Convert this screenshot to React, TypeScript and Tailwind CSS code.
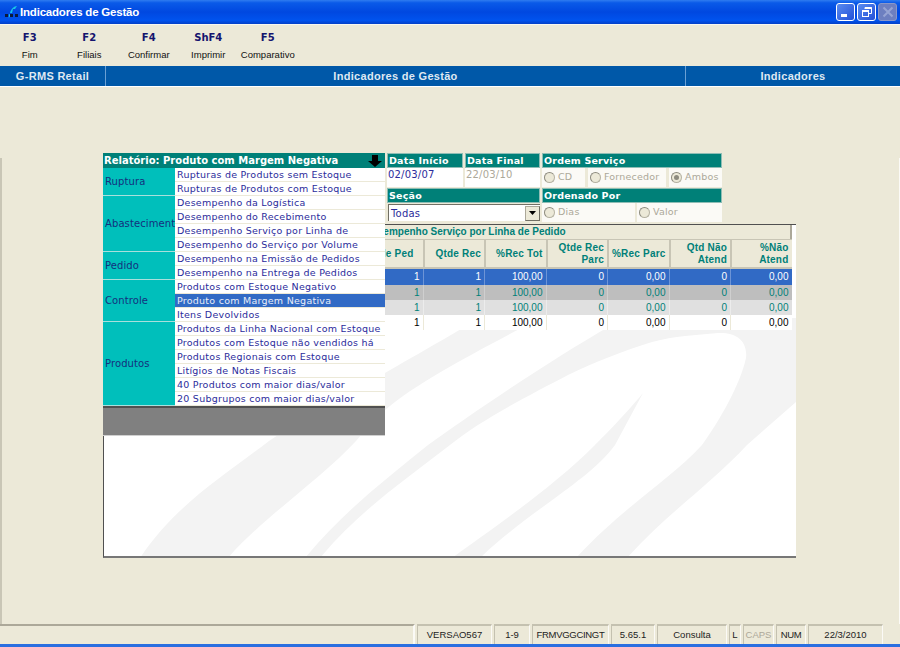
import React from 'react';

const groups = [
  { label: 'Ruptura', items: ['Rupturas de Produtos sem Estoque', 'Rupturas de Produtos com Estoque'] },
  {
    label: 'Abasteciment',
    items: ['Desempenho da Logística', 'Desempenho do Recebimento', 'Desempenho Serviço por Linha de', 'Desempenho do Serviço por Volume'],
  },
  { label: 'Pedido', items: ['Desempenho na Emissão de Pedidos', 'Desempenho na Entrega de Pedidos'] },
  { label: 'Controle', items: ['Produtos com Estoque Negativo', 'Produto com Margem Negativa', 'Itens Devolvidos'] },
  {
    label: 'Produtos',
    items: [
      'Produtos da Linha Nacional com Estoque',
      'Produtos com Estoque não vendidos há',
      'Produtos Regionais com Estoque',
      'Litígios de Notas Fiscais',
      '40 Produtos com maior dias/valor',
      '20 Subgrupos com maior dias/valor',
    ],
  },
];

const toolbar = [
  ['F3', 'Fim'],
  ['F2', 'Filiais'],
  ['F4', 'Confirmar'],
  ['ShF4', 'Imprimir'],
  ['F5', 'Comparativo'],
];

const columns = [['Qtde Ped'], ['Qtde Rec'], ['%Rec Tot'], ['Qtde Rec', 'Parc'], ['%Rec Parc'], ['Qtd Não', 'Atend'], ['%Não', 'Atend']];
const values = ['1', '1', '100,00', '0', '0,00', '0', '0,00'];

const rows = [
  { bg: 'bg-[#316ac5]', text: 'text-[#ffffff]', line: 'border-[#6d94d6]', h: 'h-[16px]' },
  { bg: 'bg-[#bebebe]', text: 'text-[#008078]', line: 'border-[#cfcfcf]', h: 'h-[15px]' },
  { bg: 'bg-[#e0e0e0]', text: 'text-[#008078]', line: 'border-[#ececec]', h: 'h-[15px]' },
  { bg: 'bg-[#ffffff]', text: 'text-[#000000]', line: 'border-[#ece9d8]', h: 'h-[15px]' },
];

const statusPanels = [
  { text: 'VERSAO567', w: 'w-[75px]' },
  { text: '1-9', w: 'w-[36px]' },
  { text: 'FRMVGGCINGT', w: 'w-[77px]', tight: true },
  { text: '5.65.1', w: 'w-[44px]' },
  { text: 'Consulta', w: 'w-[70px]' },
  { text: 'L', w: 'w-[12px]' },
  { text: 'CAPS', w: 'w-[31px]', muted: true },
  { text: 'NUM', w: 'w-[30px]', tight: true },
  { text: '22/3/2010', w: 'w-[75px]' },
];

function FieldHeader({ children }: { children: React.ReactNode }) {
  return (
    <div className="h-[15px] bg-[#008078] border border-[#8fbdb5] pl-[1px] text-[9.5px] leading-[13px] font-bold text-white tracking-[0.2px] font-['DejaVu_Sans',sans-serif]">
      {children}
    </div>
  );
}

function Radio({ label, checked, className }: { label: string; checked?: boolean; className: string }) {
  return (
    <div className={`h-[19px] bg-[#fbfaf6] flex items-center pl-[2px] gap-[3px] text-[9.5px] tracking-[0.2px] text-[#aca899] font-['DejaVu_Sans',sans-serif] ${className}`}>
      <span className="w-[11px] h-[11px] rounded-full bg-[#ece9d8] border border-[#b5b2a2] border-l-[#8d8b7f] border-t-[#8d8b7f] flex items-center justify-center">
        {checked && <span className="w-[5px] h-[5px] rounded-full bg-[#8d8b7f]" />}
      </span>
      {label}
    </div>
  );
}

// coordinates of the viewBox are the ones of the window
function Watermark() {
  return (
    <svg className="absolute inset-0 w-full h-full" viewBox="104 225 692 331" preserveAspectRatio="none">
      <path d="M140 558 C175 505 225 475 269 441 C310 415 400 365 480 318 L540 318 C480 350 420 380 385 410 C375 420 365 430 356 441 C320 480 260 520 228 558 Z" fill="#f3f3f3" />
      <path d="M305 558 C345 510 385 480 428 445 C470 415 550 360 612 325 L625 318 L796 318 L796 402 L747 445 C710 485 665 515 627 558 L576 558 C625 505 670 480 702 445 C720 420 740 385 746 358 C748 340 735 332 718 333 C695 335 675 336 652 342 C620 352 595 362 568 375 C530 395 480 420 450 445 C405 480 360 510 320 558 Z" fill="#f3f3f3" />
      <path d="M643 393 C625 415 600 440 595 445 C550 490 490 530 452 558 L480 558 C530 510 590 480 615 445 Z" fill="#f3f3f3" />
    </svg>
  );
}

export default function App() {
  return (
    <div className="relative w-[900px] h-[647px] overflow-hidden flex flex-col bg-[#ece9d8] font-['Liberation_Sans',sans-serif]">
      {/* title bar */}
      <div className="h-[24px] shrink-0 flex items-center pl-[4px] pr-[3px] bg-[linear-gradient(180deg,#2f7cf0_0%,#0a5ae8_12%,#0048e0_50%,#0053ee_85%,#0340c8_100%)]">
        <svg width="15" height="15" viewBox="0 0 15 15">
          <path d="M6 8 C7 4 10 1 13 1 L11 4 L9 4 L8 8 Z" fill="#19c5e8" />
          <path d="M5 9 C5 11 5 13 4 14 L7 10 Z" fill="#19c5e8" />
          <rect x="1" y="9" width="3" height="3" fill="#0b1a3a" />
          <rect x="6" y="9" width="3" height="3" fill="#0b1a3a" />
          <rect x="11" y="9" width="3" height="3" fill="#0b1a3a" />
        </svg>
        <span className="ml-[1px] mt-[2px] text-white text-[11.5px] font-bold tracking-[-0.2px]">Indicadores de Gestão</span>
        <div className="ml-auto flex gap-[2px]">
          <div className="w-[19px] h-[18px] rounded-[3px] border border-white bg-[linear-gradient(135deg,#5a8cf0,#2350d8)] flex items-end pl-[4px] pb-[3px]">
            <span className="w-[6px] h-[3px] bg-white" />
          </div>
          <div className="w-[19px] h-[18px] rounded-[3px] border border-white bg-[linear-gradient(135deg,#5a8cf0,#2350d8)] flex items-center justify-center">
            <svg width="12" height="12" viewBox="0 0 12 12" fill="none" stroke="#fff">
              <rect x="1.5" y="4.5" width="6" height="6" strokeWidth="1" />
              <path d="M1.5 5 H7.5" strokeWidth="2" />
              <path d="M4 3 V1.5 H10.5 V7.5 H8" strokeWidth="1" />
              <path d="M4 2 H10.5" strokeWidth="2" />
            </svg>
          </div>
          <div className="w-[19px] h-[18px] rounded-[3px] border border-[#8a97c8] bg-[#6d7fc0] flex items-center justify-center">
            <svg width="12" height="12" viewBox="0 0 12 12" stroke="#96a4d4" strokeWidth="2">
              <path d="M1.5 1.5 L10.5 10.5 M10.5 1.5 L1.5 10.5" />
            </svg>
          </div>
        </div>
      </div>

      {/* function keys */}
      <div className="h-[42px] shrink-0 flex border-t border-[#f8f7f0]">
        {toolbar.map(([key, label]) => (
          <div key={key} className="w-[59.5px] flex flex-col items-center pt-[7px]">
            <span className="text-[10px] leading-[12px] font-bold text-[#14146e] font-['DejaVu_Sans',sans-serif]">{key}</span>
            <span className="mt-[5px] text-[9.5px] leading-[12px] text-[#111]">{label}</span>
          </div>
        ))}
      </div>

      {/* blue header */}
      <div className="h-[21px] shrink-0 flex bg-[#0058a8] border-b border-white text-[11px] font-bold tracking-[0.3px] text-[#dfe8f2]">
        <div className="w-[106px] flex items-center justify-center border-r border-[#6aa0d4]">G-RMS Retail</div>
        <div className="w-[580px] flex items-center justify-center border-r border-[#6aa0d4]">Indicadores de Gestão</div>
        <div className="flex-1 flex items-center justify-center">Indicadores</div>
      </div>

      {/* form area */}
      <div className="relative flex-1">
        <div className="absolute left-0 top-[71px] bottom-0 w-[2px] bg-[#c9c6b6]" />
        <div className="absolute right-0 top-[71px] bottom-0 w-[1px] bg-[#fbfaf6]" />
        <div className="relative pt-[66px] pl-[103px]">
          <div className="pl-[284px] w-[723px] grid grid-cols-[76px_75px_180px] gap-x-[2px] gap-y-[1px]">
            <div>
              <FieldHeader>Data Início</FieldHeader>
              <div className="h-[19px] bg-white pl-[1px] text-[10px] tracking-[0.2px] leading-[13px] text-[#2b2b9b] font-['DejaVu_Sans',sans-serif]">02/03/07</div>
            </div>
            <div>
              <FieldHeader>Data Final</FieldHeader>
              <div className="h-[19px] bg-white pl-[1px] text-[10px] tracking-[0.2px] leading-[13px] text-[#aca899] font-['DejaVu_Sans',sans-serif]">22/03/10</div>
            </div>
            <div>
              <FieldHeader>Ordem Serviço</FieldHeader>
              <div className="flex gap-[3px]">
                <Radio label="CD" className="w-[43px]" />
                <Radio label="Fornecedor" className="w-[78px]" />
                <Radio label="Ambos" checked className="flex-1" />
              </div>
            </div>
            <div className="col-span-2">
              <FieldHeader>Seção</FieldHeader>
              <div className="h-[17px] mt-[1px] ml-[1px] bg-white border-l border-t border-[#716f64] flex items-center pl-[2px] text-[10px] tracking-[0.2px] text-[#2b2b9b] font-['DejaVu_Sans',sans-serif]">
                Todas
                <span className="ml-auto w-[15px] h-[15px] bg-[#ece9d8] border border-[#aca899] border-r-[#716f64] border-b-[#716f64] flex items-center justify-center">
                  <svg width="7" height="4" viewBox="0 0 7 4"><path d="M0 0 H7 L3.5 4 Z" fill="#000" /></svg>
                </span>
              </div>
            </div>
            <div>
              <FieldHeader>Ordenado Por</FieldHeader>
              <div className="flex gap-[2px]">
                <Radio label="Dias" className="w-[93px]" />
                <Radio label="Valor" className="flex-1" />
              </div>
            </div>
          </div>

          {/* results */}
          <div className="relative mt-[2px] w-[693px] h-[334px] bg-white border-t border-l border-b-2 border-[#505050] border-b-[#777]">
            <Watermark />
            <div className="relative w-[688px]">
              <div className="h-[14px] bg-[#ece9d8] border-r-2 border-[#aca899] pl-[261px] text-[10px] leading-[14px] font-bold text-[#008078] whitespace-nowrap">
                Desempenho Serviço por Linha de Pedido
              </div>
              <div className="grid grid-cols-[257px_repeat(7,61.5px)] h-[30px] bg-[#ece9d8] border-t border-b-2 border-[#c8c5b5] text-[10px] leading-[12px] font-bold text-[#008078] tracking-[0.2px]">
                <div />
                {columns.map((c, i) => (
                  <div key={c[0]} className={`flex flex-col justify-center items-end border-l-2 border-[#c8c5b5] ${i === 0 ? 'pr-[9px]' : 'pr-[3px]'}`}>
                    {c.map((t) => <span key={t}>{t}</span>)}
                  </div>
                ))}
              </div>
              {rows.map((r) => (
                <div key={r.bg} className={`grid grid-cols-[257px_repeat(7,61.5px)] ${r.h} ${r.bg} ${r.text} text-[10px] leading-[15px]`}>
                  <div />
                  {values.map((v, i) => (
                    <div key={i} className={`text-right pr-[3px] border-l ${r.line}`}>{v}</div>
                  ))}
                </div>
              ))}
            </div>
          </div>

          {/* report picker, open over the form */}
          <div className="absolute left-[103px] top-[66px] w-[282px] font-['DejaVu_Sans',sans-serif]">
            <div className="h-[15px] bg-[#008078] flex items-center pl-[1px] text-[10px] font-bold text-white whitespace-nowrap">
              Relatório: Produto com Margem Negativa
              <svg className="ml-auto mr-[3px]" width="14" height="12" viewBox="0 0 14 12">
                <path d="M4 0 H10 V6 H14 L7 12 L0 6 H4 Z" fill="#000" />
              </svg>
            </div>
            {groups.map((g) => (
              <div key={g.label} className="flex">
                <div className="w-[72px] shrink-0 bg-[#00bfbb] flex items-center pl-[2px] border-b border-[#a8e0dc] text-[10px] tracking-[0.1px] text-[#14307e] overflow-hidden whitespace-nowrap">
                  {g.label}
                </div>
                <div className="flex-1 bg-white text-[9.5px] tracking-[0.25px]">
                  {g.items.map((item) => {
                    const selected = item === 'Produto com Margem Negativa';
                    return (
                      <div key={item} className={`h-[14px] pl-[2px] leading-[13px] border-b border-[#ece9d8] whitespace-nowrap overflow-hidden ${selected ? 'bg-[#316ac5] text-[#e8ecf8]' : 'text-[#2b2b9b]'}`}>
                        {item}
                      </div>
                    );
                  })}
                </div>
              </div>
            ))}
            <div className="h-[30px] bg-[#808080] border-t-2 border-b border-[#505050] border-b-[#d0d0d0]" />
          </div>
        </div>
      </div>

      {/* status bar */}
      <div className="h-[20px] shrink-0 flex items-stretch text-[9.5px] text-[#222]">
        <div className="w-[415px] border-t-2 border-[#aca899] border-r-2 border-r-[#fbfaf6]" />
        <div className="flex gap-[2px] ml-[2px]">
          {statusPanels.map((p) => (
            <div key={p.text} className={`${p.w} flex items-center justify-center border-t-2 border-l border-[#c4c1b0] border-r border-r-[#fbfaf6] whitespace-nowrap ${p.muted ? 'text-[#aca899]' : ''} ${p.tight ? 'tracking-[-0.3px]' : ''}`}>
              {p.text}
            </div>
          ))}
        </div>
      </div>
      <div className="h-[3px] shrink-0 bg-[#2a6fe0]" />
    </div>
  );
}
